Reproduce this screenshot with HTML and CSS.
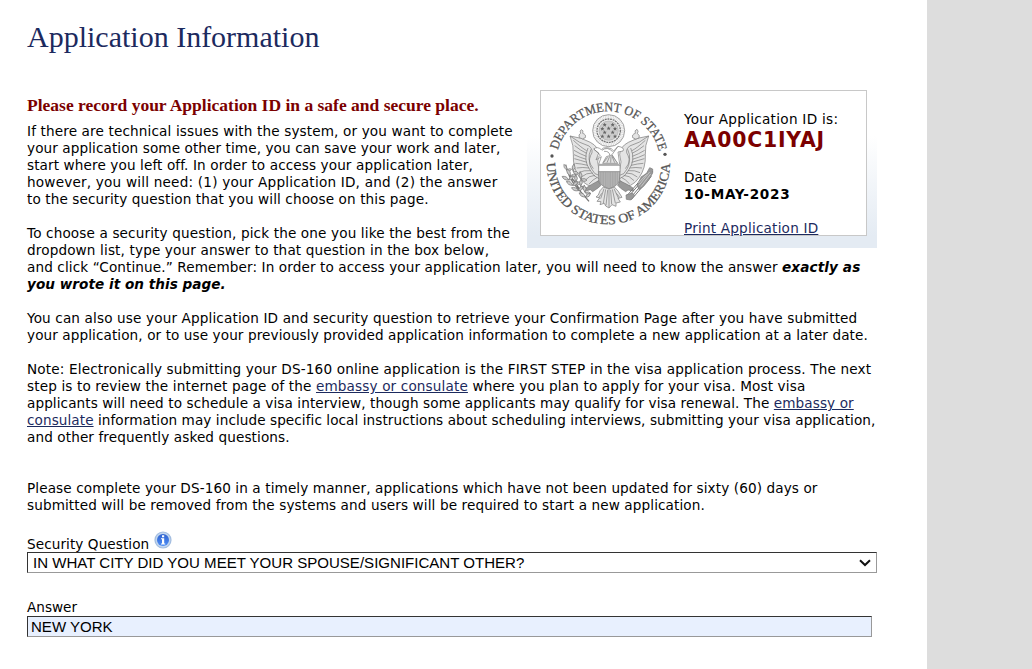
FILE: index.html
```
<!DOCTYPE html>
<html lang="en">
<head>
<meta charset="utf-8">
<title>Application Information</title>
<link rel="stylesheet" href="styles.css">
</head>
<body>
<main class="page">
  <h1 class="title"><span>Application Information</span></h1>
  <aside class="card-shell">
    <div class="card">
      <svg class="seal" viewBox="63 33 402 432" role="img" aria-label="Department of State seal">
        <defs>
          <path id="arc-top" d="M109 250A156 156 0 0 1 421 250"/>
          <path id="arc-bottom" d="M80 248A185 185 0 0 0 450 248"/>
          <g id="wing">
            <path class="plume" d="M150 168Q185 172 211 187Q237 201 237 224Q229 245 237 269L237 320Q200 325 179 293Q158 265 160 223Q162 198 150 168Z"/>
            <path d="M150 168Q178 190 207 198Q223 211 212 226Q203 247 215 267Q223 285 237 286M160 181Q185 204 200 212M164 197Q182 212 200 220M162 211Q180 222 199 229M162 224Q181 233 199 238M163 236Q181 241 201 247M166 250Q183 251 203 256M170 264Q188 261 207 264M176 278Q191 270 212 272M184 291Q199 278 218 279M194 302Q208 286 225 286M207 312Q219 298 232 292M220 319Q229 308 237 300M204 204Q188 240 210 270Q221 291 237 296M213 208Q198 240 220 266"/>
          </g>
          <g id="leaf"><path d="M0 0Q-13-7-10-20Q3-14 0 0Q11-8 18-3Q12 9 0 0"/></g>
          <path id="star" d="M0-6L2-2L6-2L3 1L4 6L0 3L-4 6L-3 1L-6-2L-2-2Z"/>
        </defs>
        <text class="seal-text"><textPath href="#arc-top" startOffset="40" textLength="414" lengthAdjust="spacingAndGlyphs">DEPARTMENT OF STATE</textPath></text>
        <text class="seal-text"><textPath href="#arc-bottom" startOffset="1" textLength="578" lengthAdjust="spacingAndGlyphs">UNITED STATES OF AMERICA</textPath></text>
        <circle class="dot" cx="96" cy="228" r="5"/><circle class="dot" cx="435" cy="223" r="5"/>
        <g class="eagle">
          <circle class="rays" cx="266" cy="152" r="42"/>
          <circle cx="266" cy="152" r="48"/>
          <circle class="cloud" cx="266" cy="152" r="35"/>
          <circle class="stars-bg" cx="266" cy="152" r="29"/>
          <g class="stars">
            <use href="#star" x="254" y="134"/><use href="#star" x="278" y="134"/>
            <use href="#star" x="247" y="146"/><use href="#star" x="266" y="145"/><use href="#star" x="285" y="146"/>
            <use href="#star" x="254" y="157"/><use href="#star" x="278" y="157"/>
            <use href="#star" x="247" y="169"/><use href="#star" x="266" y="169"/><use href="#star" x="285" y="169"/>
          </g>
          <use href="#wing"/><use href="#wing" transform="matrix(-1 0 0 1 536 0)"/>
          <path class="plume" d="M178 173Q174 163 182 160Q178 152 184 149Q192 151 188 160Q199 163 196 173Q188 180 178 173ZM338 173Q335 163 346 160Q342 151 351 148Q357 153 352 161Q361 165 357 174Q347 181 338 173Z"/>
          <path class="white" d="M221 207Q232 198 244 209Q249 202 260 203Q276 203 281 213L294 199Q315 202 309 213L294 216L299 253H236L244 230L228 240L236 219Z"/>
          <path d="M222 208L241 225L231 236M246 211Q262 198 278 215M294 199L276 224L292 250M252 214Q268 213 269 225"/>
          <path class="plume" d="M248 250L259 230L275 225L293 250Z"/>
          <path d="M251 247L263 232M261 248L269 229M272 248L273 229M284 248L276 229"/>
          <path class="shield" d="M235 274H300L298 302Q294 318 267 326Q241 318 237 302Z"/>
          <path class="white" d="M236 256H300V275H236Z"/>
          <path class="stripes" d="M241 276V309M246 276V315M251 276V320M256 276V322M261 276V324M267 276V326M272 276V324M277 276V322M282 276V320M287 276V316M292 276V313"/>
          <path class="plume" d="M250 321Q238 331 235 345L228 351L239 354L231 364L243 365L240 374L253 370L257 378L267 384L276 374L288 379V369L301 366L294 355L306 352Q294 330 283 321L267 328Z"/>
          <path d="M252 326L242 356M257 328L250 370M263 330L258 376M267 330V382M272 330L275 373M277 328L286 369M282 326L296 356M245 340L236 354M289 340L299 352"/>
          <path class="dark" d="M234 303L214 314L198 324L193 334L211 329L218 335L234 324L243 316ZM301 303L321 313L338 323L341 333L324 330L317 335L302 325L293 316Z"/>
          <path class="branch" d="M137 254Q145 294 171 323Q190 344 207 364M148 286Q168 306 182 334"/>
          <g class="leaves">
            <use href="#leaf" transform="translate(140 270) scale(.85)"/><use href="#leaf" transform="translate(151 287)"/><use href="#leaf" transform="translate(146 300) rotate(-35)"/><use href="#leaf" transform="translate(168 306) rotate(25)"/><use href="#leaf" transform="translate(158 316) rotate(-30)"/><use href="#leaf" transform="translate(182 319) rotate(30)"/><use href="#leaf" transform="translate(175 332) rotate(-40)"/><use href="#leaf" transform="translate(195 337) rotate(20)"/><use href="#leaf" transform="translate(196 351) rotate(-30)"/><use href="#leaf" transform="translate(159 273) rotate(35)"/><use href="#leaf" transform="translate(183 297) rotate(20)"/>
          </g>
          <path class="arrows" d="M323 353L391 273M329 357L398 274M320 348L379 280M334 359L394 289"/>
          <path class="dark" d="M318 345L337 339L344 346L332 360L319 358ZM351 315L364 290L379 281L389 263L398 267V279L387 299L371 319L357 329Z"/>
          <path class="white-line" d="M357 316L389 276M363 320L392 282M355 309L380 283"/>
        </g>
      </svg>
      <div class="details">
        <div class="id-label">Your Application ID is:</div>
        <div class="app-id">AA00C1IYAJ</div>
        <div class="date-label">Date</div>
        <div class="date">10-MAY-2023</div>
        <a class="print" href="#">Print Application ID</a>
      </div>
    </div>
  </aside>
  <h2 class="notice">Please record your Application ID in a safe and secure place.</h2>
  <p><span class="loose">If there are technical issues with the system, or you want to complete</span><br><span class="snug">your application some other time, you can save your work and later,</span><br>start where you left off. In order to access your application later,<br><span class="wide">however, you will need: (1) your Application ID, and (2) the answer</span><br>to the security question that you will choose on this page.</p>
  <p><span class="loose">To choose a security question, pick the one you like the best from the<br>dropdown list, type your answer to that question in the box below,</span><br>and click “Continue.” Remember: In order to access your application later, you will need to know the answer <em>exactly as<br><span class="tight">you wrote it on this page.</span></em></p>
  <p><span class="loose">You can also use your Application ID and security question to retrieve your Confirmation Page after you have submitted</span><br><span class="snug">your application, or to use your previously provided application information to complete a new application at a later date.</span></p>
  <p><span class="looser">Note: Electronically submitting your DS-160 online application is the FIRST STEP in the visa application process. The next</span><br><span class="loose">step is to review the internet page of the <a href="#">embassy or consulate</a> where you plan to apply for your visa. Most visa</span><br><span class="snug">applicants will need to schedule a visa interview, though some applicants may qualify for visa renewal. The <a href="#">embassy or</a></span><br><span class="snugger"><a href="#">consulate</a> information may include specific local instructions about scheduling interviews, submitting your visa application,</span><br>and other frequently asked questions.</p>
  <p class="timely">Please complete your DS-160 in a timely manner, applications which have not been updated for sixty (60) days or<br>submitted will be removed from the systems and users will be required to start a new application.</p>
  <div class="label-row">
    <label for="question">Security Question</label>
    <svg class="info" viewBox="0 0 18 18" aria-hidden="true">
      <defs><linearGradient id="blue" x2="0" y2="1"><stop stop-color="#2f62cf"/><stop offset="1" stop-color="#4d8df5"/></linearGradient></defs>
      <circle cx="9" cy="9" r="8.6" fill="#a3bde0"/><circle cx="9" cy="9" r="7.4" fill="#c2d6ee"/><circle cx="9" cy="9" r="6" fill="url(#blue)"/>
      <path d="M8 4.3h2.2v2H8zM7 7.2h3.2v5.2h1v1.2H7v-1.2h1V8.3H7z" fill="#fff"/>
    </svg>
  </div>
  <div class="select-wrap">
    <select id="question" class="field"><option>IN WHAT CITY DID YOU MEET YOUR SPOUSE/SIGNIFICANT OTHER?</option></select>
    <svg class="chevron" viewBox="0 0 12 8" aria-hidden="true"><path d="M1 1.2L6 6L11 1.2"/></svg>
  </div>
  <label class="answer-label" for="answer">Answer</label>
  <input id="answer" class="field answer" value="NEW YORK">
</main>
</body>
</html>
```
FILE: styles.css
```
* { box-sizing: border-box; }
body { margin: 0; background: #ddd; font: 13.6px/17px Verdana, "DejaVu Sans", sans-serif; color: #000; overflow: hidden; }
.page { width: 927px; height: 669px; padding: 17px 50px 0 27px; background: #fff; }
.title { margin: 0; height: 59px; font: 400 30px/40px "Liberation Serif", serif; color: #1c2a5e; white-space: nowrap; }
.card-shell { float: right; width: 350px; height: 172px; padding: 14px 10px 12px 13px; background: linear-gradient(#fff 35%, #e4ebf3 93%); }
.card { display: flex; width: 327px; height: 146px; border: 1px solid #c8c8c8; background: #fff; white-space: nowrap; }
.seal { flex: none; width: 134px; height: 144px; margin-right: 9px; }
.seal-text { font: 39px "Liberation Serif", serif; fill: #555; stroke: #555; stroke-width: .8; }
.dot { fill: #555; }
.eagle { fill: none; stroke: #777; stroke-width: 2; stroke-linejoin: round; }
.eagle .rays { stroke: #ddd; stroke-width: 11; stroke-dasharray: 3 2; }
.eagle .cloud { fill: #eee; stroke: #777; stroke-width: 4; stroke-dasharray: 6 2; }
.eagle .stars-bg { fill: #ccc; stroke: #aaa; }
.eagle .stars { fill: #666; stroke: none; }
.plume { fill: #e4e4e4; }
.white { fill: #fff; }
.dark { fill: #999; }
.shield { fill: #bbb; }
.stripes { stroke: #999; }
.branch { stroke-width: 4; }
.leaves { fill: #ccc; }
.arrows { stroke-width: 3; }
.white-line { stroke: #ddd; }
.details { padding-top: 20px; }
.id-label { letter-spacing: .28px; }
.app-id { height: 24px; font: 700 20.4px/24px Verdana, "DejaVu Sans", sans-serif; letter-spacing: .8px; color: #7b0000; }
.date-label { margin-top: 17px; }
.date { margin-bottom: 17px; font-weight: 700; letter-spacing: .7px; }
.print { letter-spacing: .2px; }
a { color: #1c2a5e; text-decoration: underline; }
.notice { margin: 0; padding-top: 20px; height: 47px; font: 700 17.5px/19px "Liberation Serif", serif; color: #7b0000; white-space: nowrap; }
p { margin: 0 0 17px; letter-spacing: .105px; white-space: nowrap; }
em { font-weight: 700; }
.tight { letter-spacing: .03px; }
.snugger { letter-spacing: .073px; }
.snug { letter-spacing: .09px; }
.loose { letter-spacing: .135px; }
.looser { letter-spacing: .156px; }
.wide { letter-spacing: .2px; }
.timely { margin: 34px 0 0; }
.label-row { display: flex; gap: 5px; height: 38px; padding-top: 17px; }
.label-row label { padding-top: 5px; letter-spacing: .08px; }
.info { width: 18px; height: 18px; }
.select-wrap { position: relative; height: 21px; }
.field { display: block; appearance: none; width: 850px; height: 21px; padding: 0 5px; margin: 0; border: 1px solid; border-color: #333 #999 #999 #333; border-radius: 0; background: #fff; color: #000; font: 15.05px/19px "Liberation Sans", Arial, sans-serif; outline: 0; }
.chevron { position: absolute; right: 6px; top: 7px; width: 12px; height: 8px; fill: none; stroke: #111; stroke-width: 2; }
.answer-label { display: block; margin-top: 26px; }
.answer { width: 845px; padding: 0 3px; background: #e8f0fe; }
```
